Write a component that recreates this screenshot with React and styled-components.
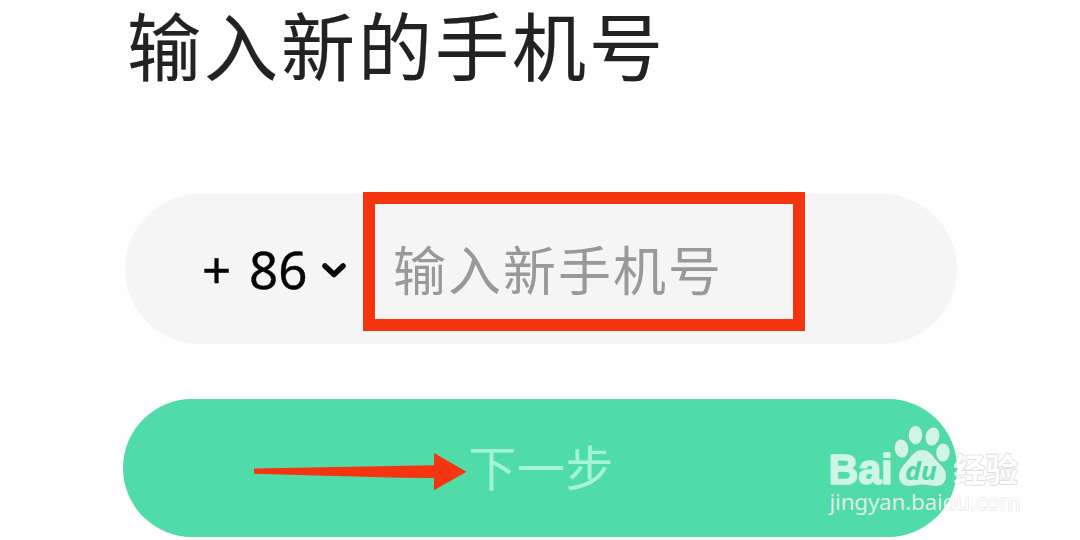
import React from "react";
import styled, { createGlobalStyle } from "styled-components";

const GlobalStyle = createGlobalStyle`
  * { box-sizing: border-box; }
  body {
    margin: 0;
    background: #fefefe;
    font-family: "Noto Sans CJK SC", "Noto Sans", sans-serif;
    overflow: hidden;
  }
`;

const Page = styled.main`
  position: relative;
  width: 1080px;
  height: 540px;
  padding: 0 123px;
  display: flex;
  flex-direction: column;
`;

const Title = styled.h1`
  margin: 0 0 0 4px;
  height: 194px;
  font-size: 74px;
  font-weight: 400;
  line-height: 85px;
  letter-spacing: 3px;
  color: #222;
  -webkit-text-stroke: 0.2px #222;
`;

const PhoneField = styled.div`
  display: flex;
  align-items: center;
  width: 832px;
  height: 150px;
  margin: 0 0 55px 2px;
  padding-left: 77px;
  border-radius: 75px;
  background: #f5f5f5;
`;

const CountryCode = styled.button`
  display: flex;
  align-items: center;
  width: 161px;
  padding: 0;
  border: 0;
  background: none;
  color: #050505;
  font: 400 51px/62px "Noto Sans", sans-serif;
  -webkit-text-stroke: 0.4px #050505;
`;

const Plus = styled.span`
  width: 47px;
  text-align: left;
`;

const Chevron = styled.svg`
  margin: 3px 0 0 14px;
`;

const Highlight = styled.div`
  display: flex;
  align-items: center;
  width: 442px;
  height: 139px;
  margin-top: -15px;
  padding-left: 18px;
  border: 12px solid #f53510;
`;

const Placeholder = styled.span`
  padding-top: 12px;
  font-size: 53px;
  line-height: 60px;
  letter-spacing: 2px;
  color: #999;
  white-space: nowrap;
`;

const NextButton = styled.button`
  width: 834px;
  height: 138px;
  flex: none;
  padding: 0 0 6px;
  border: 0;
  border-radius: 69px;
  background: #4fdca8;
  color: #a5f4d6;
  font: 400 48px/132px "Noto Sans CJK SC", sans-serif;
  letter-spacing: 0.5px;
  text-indent: 2px;
`;

const Arrow = styled.svg`
  position: absolute;
  left: 250px;
  top: 450px;
`;

const Watermark = styled.svg`
  position: absolute;
  left: 820px;
  top: 415px;
`;

export default function App() {
  return (
    <>
      <GlobalStyle />
      <Page>
        <Title>输入新的手机号</Title>
        <PhoneField>
          <CountryCode>
            <Plus>+</Plus>
            <span>86</span>
            <Chevron width="26" height="20" viewBox="0 0 26 20">
              <path d="M4 5 L13 13.500 L22 5" fill="none" stroke="#050505" strokeWidth="5.500" strokeLinecap="round" strokeLinejoin="round" />
            </Chevron>
          </CountryCode>
          <Highlight>
            <Placeholder>输入新手机号</Placeholder>
          </Highlight>
        </PhoneField>
        <NextButton>下一步</NextButton>
        <Arrow width="220" height="44" viewBox="250 450 220 44">
          <path d="M254 468.4 L434 465.2 V453 L466.5 471.7 L434 490.3 V478 L400 477.8 L254 473.8 Z" fill="#f53510" />
        </Arrow>
        <Watermark width="220" height="110" viewBox="820 415 220 110">
          <g opacity="0.72" fill="#fff" stroke="#aaa" strokeOpacity="0.6" strokeWidth="1.6" paintOrder="stroke" strokeLinejoin="round">
            <text x="828.5" y="483.5" textLength="64" lengthAdjust="spacingAndGlyphs" fontFamily="Liberation Sans" fontWeight="700" fontSize="43" stroke="#fff" strokeOpacity="1">Bai</text>
            <ellipse cx="901.5" cy="448.5" rx="6.8" ry="9" transform="rotate(-8 901.5 448.5)" />
            <ellipse cx="915.5" cy="435" rx="6.8" ry="9.2" />
            <ellipse cx="932.5" cy="436.5" rx="6.8" ry="9.2" transform="rotate(14 932.5 436.5)" />
            <ellipse cx="943" cy="452.5" rx="6.8" ry="9" transform="rotate(4 943 452.5)" />
            <path d="M922 450 C929 450 932 455 936 460 C940 465 946 468 946 476 C946 482 942 486 936 486 C931 486 927 484.500 922 484.500 C917 484.500 914 486 909 486 C903 486 899 482 899 476 C899 468 905 464 909 459 C913 454 916 450 922 450 Z" />
            <text x="953" y="482" textLength="65" lengthAdjust="spacingAndGlyphs" fontFamily="Noto Sans CJK SC" fontWeight="700" fontSize="33">经验</text>
            <text x="829.5" y="510" textLength="191" fontFamily="Noto Sans" fontSize="22.5" strokeWidth="1.2" strokeOpacity="0.45">jingyan.baidu.com</text>
          </g>
          <text x="905" y="480" textLength="32" lengthAdjust="spacingAndGlyphs" fontFamily="Open Sans" fontStyle="italic" fontWeight="700" fontSize="25" fill="#4fd6a5">du</text>
        </Watermark>
      </Page>
    </>
  );
}
